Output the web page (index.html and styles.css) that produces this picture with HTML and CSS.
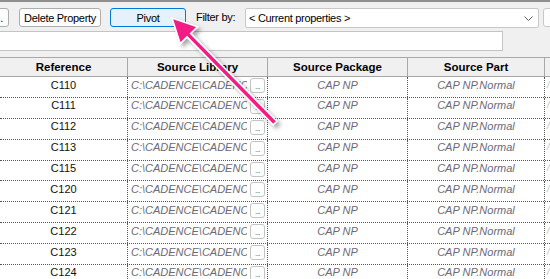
FILE: index.html
```html
<!DOCTYPE html>
<html>
<head>
<meta charset="utf-8">
<link rel="stylesheet" href="styles.css">
</head>
<body>
<div class="topline"></div>
<div class="toolbar">
  <div class="btn btn-more">...</div>
  <div class="btn btn-delete">Delete Property</div>
  <div class="btn btn-pivot">Pivot</div>
  <div class="filter-label">Filter by:</div>
  <div class="select">
    <span class="select-text">&lt; Current properties &gt;</span>
    <svg class="chev" width="9" height="6" viewBox="0 0 9 6"><polyline points="0.5,0.5 4.5,4.5 8.5,0.5" fill="none" stroke="#606060" stroke-width="1"/></svg>
  </div>
  <div class="extra"></div>
</div>
<div class="row2"><div class="textbox"></div></div>
<div class="grid">
  <div class="hdr">
    <div class="hcell">Reference</div>
    <div class="hcell">Source Library</div>
    <div class="hcell">Source Package</div>
    <div class="hcell">Source Part</div>
    <div class="hcell hlast"></div>
  </div>
  <div class="row"><div class="cell ref">C110</div><div class="cell lib"><span class="lib-text">C:\CADENCE\CADENCE</span><span class="dots-btn">...</span></div><div class="cell it">CAP NP</div><div class="cell it">CAP NP.Normal</div><div class="cell last">/</div></div>
  <div class="row"><div class="cell ref">C111</div><div class="cell lib"><span class="lib-text">C:\CADENCE\CADENCE</span><span class="dots-btn">...</span></div><div class="cell it">CAP NP</div><div class="cell it">CAP NP.Normal</div><div class="cell last">/</div></div>
  <div class="row"><div class="cell ref">C112</div><div class="cell lib"><span class="lib-text">C:\CADENCE\CADENCE</span><span class="dots-btn">...</span></div><div class="cell it">CAP NP</div><div class="cell it">CAP NP.Normal</div><div class="cell last">/</div></div>
  <div class="row"><div class="cell ref">C113</div><div class="cell lib"><span class="lib-text">C:\CADENCE\CADENCE</span><span class="dots-btn">...</span></div><div class="cell it">CAP NP</div><div class="cell it">CAP NP.Normal</div><div class="cell last">/</div></div>
  <div class="row"><div class="cell ref">C115</div><div class="cell lib"><span class="lib-text">C:\CADENCE\CADENCE</span><span class="dots-btn">...</span></div><div class="cell it">CAP NP</div><div class="cell it">CAP NP.Normal</div><div class="cell last">/</div></div>
  <div class="row"><div class="cell ref">C120</div><div class="cell lib"><span class="lib-text">C:\CADENCE\CADENCE</span><span class="dots-btn">...</span></div><div class="cell it">CAP NP</div><div class="cell it">CAP NP.Normal</div><div class="cell last">/</div></div>
  <div class="row"><div class="cell ref">C121</div><div class="cell lib"><span class="lib-text">C:\CADENCE\CADENCE</span><span class="dots-btn">...</span></div><div class="cell it">CAP NP</div><div class="cell it">CAP NP.Normal</div><div class="cell last">/</div></div>
  <div class="row"><div class="cell ref">C122</div><div class="cell lib"><span class="lib-text">C:\CADENCE\CADENCE</span><span class="dots-btn">...</span></div><div class="cell it">CAP NP</div><div class="cell it">CAP NP.Normal</div><div class="cell last">/</div></div>
  <div class="row"><div class="cell ref">C123</div><div class="cell lib"><span class="lib-text">C:\CADENCE\CADENCE</span><span class="dots-btn">...</span></div><div class="cell it">CAP NP</div><div class="cell it">CAP NP.Normal</div><div class="cell last">/</div></div>
  <div class="row"><div class="cell ref">C124</div><div class="cell lib"><span class="lib-text">C:\CADENCE\CADENCE</span><span class="dots-btn">...</span></div><div class="cell it">CAP NP</div><div class="cell it">CAP NP.Normal</div><div class="cell last">/</div></div>
</div>
<svg class="overlay" width="550" height="279" viewBox="0 0 550 279">
  <defs>
    <filter id="sh" x="-20%" y="-20%" width="140%" height="140%">
      <feDropShadow dx="3" dy="3" stdDeviation="2.2" flood-color="#000" flood-opacity="0.35"/>
    </filter>
  </defs>
  <polygon filter="url(#sh)" points="172,18 197.4,26.7 190.6,33.4 276.8,121.3 273.2,124.8 187,36.9 180.2,43.5" fill="#f21b84" stroke="#ffffff" stroke-width="1.5" stroke-linejoin="miter"/>
</svg>
</body>
</html>
```
FILE: styles.css
```css
* { box-sizing: border-box; }
html, body { margin: 0; padding: 0; }
body {
  width: 550px;
  height: 279px;
  overflow: hidden;
  background: #f0f0f0;
  font-family: "Liberation Sans", Arial, sans-serif;
  color: #000;
  position: relative;
}
.topline { height: 2px; background: #8e8e8e; }
.toolbar {
  display: flex;
  align-items: flex-start;
  margin-top: 6px;
  height: 20px;
}
.btn {
  height: 19px;
  border: 1px solid #adadad;
  border-radius: 3px;
  background: #fdfdfd;
  font-size: 11px;
  letter-spacing: -0.3px;
  display: flex;
  align-items: center;
  justify-content: center;
  flex: none;
}
.btn-more { width: 20px; margin-left: -11px; }
.btn-delete { margin-left: 10px; width: 82px; }
.btn-pivot { margin-left: 9px; width: 76px; background: #e5f1fb; border-color: #0078d7; }
.filter-label {
  margin-left: 10px;
  width: 49px;
  flex: none;
  font-size: 11px;
  letter-spacing: -0.3px;
  line-height: 19px;
}
.select {
  width: 294px;
  height: 20px;
  flex: none;
  background: #fff;
  border: 1px solid #c8c8c8;
  border-radius: 2px;
  display: flex;
  align-items: center;
  padding-left: 3px;
  font-size: 11px;
  letter-spacing: -0.3px;
}
.select-text { flex: 1; }
.chev { margin-right: 5px; margin-top: 1px; }
.extra {
  margin-left: 4px;
  width: 20px;
  height: 19px;
  flex: none;
  background: #fdfdfd;
  border: 1px solid #c8c8c8;
  border-radius: 3px;
}
.row2 { margin-top: 3px; height: 20px; }
.textbox {
  width: 503px;
  height: 20px;
  background: #fff;
  border: 1px solid #c4c4c4;
  border-left: none;
}
.grid { margin-top: 6px; }
.hdr {
  display: grid;
  grid-template-columns: 128px 140px 140px 137px 1fr;
  height: 20px;
  border-top: 1px solid #a8a8a8;
  border-bottom: 1px solid #a8a8a8;
  background: #f0f0f0;
}
.hcell {
  border-right: 1px solid #a8a8a8;
  font-weight: bold;
  font-size: 11.5px;
  text-align: center;
  line-height: 18px;
}
.hlast { border-right: none; }
.row {
  display: grid;
  grid-template-columns: 128px 140px 140px 137px 1fr;
  height: 20.875px;
  border-bottom: 1px dotted #555;
  background: #fff;
}
.cell {
  border-right: 1px dotted #555;
  font-size: 11px;
  line-height: 13px;
  padding-top: 1.5px;
  white-space: nowrap;
  overflow: hidden;
}
.ref { text-align: center; color: #111; }
.it { text-align: center; font-style: italic; color: #6a6a78; }
.lib { display: flex; padding-left: 3px; padding-top: 0; }
.lib-text {
  width: 116px;
  flex: none;
  overflow: hidden;
  font-style: italic;
  color: #6a6a78;
  padding-top: 1.5px;
}
.dots-btn {
  margin-left: 3px;
  margin-top: 1px;
  width: 15px;
  height: 15px;
  flex: none;
  border: 1px solid #c4c4c4;
  border-radius: 3px;
  background: #fff;
  font-size: 8px;
  line-height: 16px;
  text-align: center;
  color: #555;
  letter-spacing: -0.5px;
}
.last { border-right: none; color: #bbb; font-size: 9px; padding-left: 2px; font-style: italic; }
.overlay { position: absolute; left: 0; top: 0; pointer-events: none; }
```
